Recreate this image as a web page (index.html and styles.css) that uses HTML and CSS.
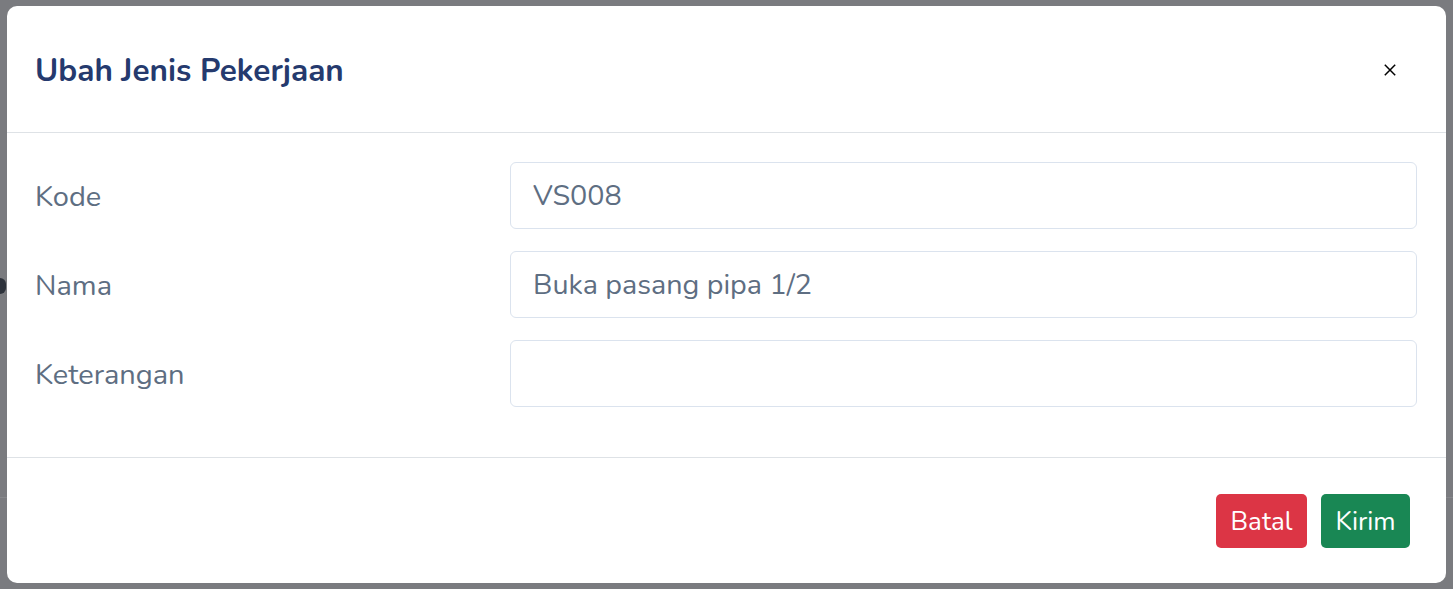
FILE: index.html
```html
<!DOCTYPE html>
<html lang="id">
<head>
<meta charset="utf-8">
<title>Ubah Jenis Pekerjaan</title>
<link rel="stylesheet" href="styles.css">
</head>
<body>
<div class="backdrop">
  <div class="bg-mark"></div>
  <div class="bg-line"></div>
  <div class="modal">
    <div class="modal-header">
      <h5 class="modal-title">Ubah Jenis Pekerjaan</h5>
      <button class="btn-close" type="button" aria-label="Close">
        <svg width="12" height="12" viewBox="0 0 12 12"><path d="M0.8 0.8 L11.2 11.2 M11.2 0.8 L0.8 11.2" stroke="#000" stroke-width="1.5" fill="none"/></svg>
      </button>
    </div>
    <div class="modal-body">
      <div class="form-row">
        <label class="form-label">Kode</label>
        <div class="form-input">VS008</div>
      </div>
      <div class="form-row">
        <label class="form-label">Nama</label>
        <div class="form-input">Buka pasang pipa 1/2</div>
      </div>
      <div class="form-row">
        <label class="form-label">Keterangan</label>
        <div class="form-input"></div>
      </div>
    </div>
    <div class="modal-footer">
      <button class="btn btn-danger" type="button">Batal</button>
      <button class="btn btn-success" type="button">Kirim</button>
    </div>
  </div>
</div>
</body>
</html>
```

FILE: styles.css
```css
* { box-sizing: border-box; }
html, body {
  margin: 0;
  padding: 0;
  width: 1453px;
  height: 589px;
  overflow: hidden;
}
body {
  font-family: "Nunito", "Lato", "Noto Sans", sans-serif;
  background: #7b7c80;
}
.backdrop {
  position: relative;
  width: 1453px;
  height: 589px;
  padding: 6px 7px 6px 7px;
  background: #7a7b7f;
}
.bg-mark {
  position: absolute;
  left: -6px;
  top: 278px;
  width: 12px;
  height: 16px;
  border-radius: 6px;
  background: #2d323b;
}
.bg-line {
  position: absolute;
  left: 0;
  right: 0;
  top: 497px;
  height: 1px;
  background: #86878b;
}
.modal {
  position: relative;
  width: 1439px;
  height: 577px;
  background: #fff;
  border-radius: 10px;
  display: flex;
  flex-direction: column;
}
.modal-header {
  height: 127px;
  padding: 0 29px 0 28px;
  border-bottom: 1px solid #dee2e6;
  display: flex;
  align-items: center;
  justify-content: space-between;
}
.modal-title {
  margin: 0;
  font-size: 31.5px;
  font-weight: 700;
  color: #253a6e;
  line-height: 1;
  padding-top: 3px;
}
.btn-close {
  border: 0;
  background: transparent;
  padding: 0;
  width: 12px;
  height: 12px;
  margin-right: 21px;
  margin-top: 2px;
  display: flex;
}
.modal-body {
  padding: 29px 29px 29px 28px;
  display: flex;
  flex-direction: column;
  gap: 22px;
  border-bottom: 1px solid #dee2e6;
  height: 325px;
}
.form-row {
  display: grid;
  grid-template-columns: 475px 1fr;
  align-items: center;
}
.form-label {
  font-size: 29px;
  color: #5e6e82;
  padding-top: 2px;
}
.form-input {
  height: 67px;
  border: 1px solid #dbe3ee;
  border-radius: 6px;
  padding: 0 22px;
  font-size: 28.7px;
  color: #5e6e82;
  display: flex;
  align-items: center;
}
.modal-footer {
  flex: 1;
  display: flex;
  justify-content: flex-end;
  align-items: center;
  gap: 14px;
  padding: 1px 36px 0 0;
}
.btn {
  height: 54px;
  border: 0;
  border-radius: 5px;
  font-family: inherit;
  font-size: 26px;
  color: #fff;
  padding: 0;
}
.btn-danger { background: #dc3545; width: 91px; }
.btn-success { background: #198754; width: 89px; }
```
